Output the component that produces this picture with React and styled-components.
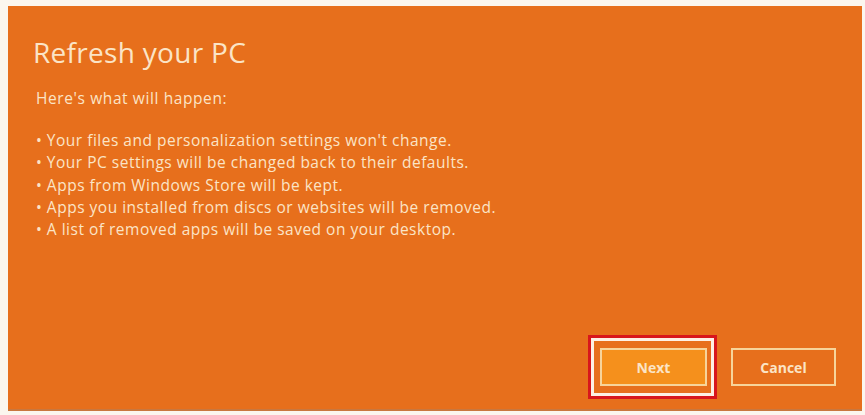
import React from "react";
import styled, { createGlobalStyle } from "styled-components";

const GlobalStyle = createGlobalStyle`
  html, body {
    margin: 0;
    padding: 0;
    background: #fbf6ee;
  }
`;

const Screen = styled.div`
  width: 865px;
  height: 415px;
  padding: 6px 3px 4px 8px;
  box-sizing: border-box;
  display: flex;
`;

const Panel = styled.div`
  flex: 1;
  background: #e76f1c;
  border-bottom: 2px solid #c9773e;
  display: flex;
  flex-direction: column;
  padding: 27px 26px 10px 25px;
  font-family: "Open Sans", "Noto Sans", sans-serif;
  color: #fbe4c6;
`;

const Title = styled.h1`
  margin: 0;
  font-size: 28px;
  font-weight: 400;
  letter-spacing: 0.3px;
  line-height: 38px;
`;

const Intro = styled.p`
  margin: 17px 0 21px 3px;
  font-size: 15.5px;
  letter-spacing: 0.6px;
  line-height: 20px;
`;

const List = styled.ul`
  list-style: none;
  margin: 0 0 0 3px;
  padding: 0;
`;

const Item = styled.li`
  font-size: 15.5px;
  letter-spacing: 0.5px;
  line-height: 22.3px;
  &::before {
    content: "• ";
  }
`;

const Actions = styled.div`
  margin-top: auto;
  display: flex;
  justify-content: flex-end;
  align-items: center;
  gap: 14px;
`;

// red focus frame drawn round the default action
const Highlight = styled.div`
  border: 3px solid #d8161c;
  box-shadow: inset 0 0 0 3px #fdf0e4;
  padding: 10px 7px 10px 9px;
`;

const Button = styled.button`
  width: ${(p) => (p.$wide ? "107px" : "105px")};
  height: 38px;
  box-sizing: border-box;
  border: 2px solid #f7d49a;
  background: ${(p) => (p.$primary ? "#f5901c" : "#e76f1c")};
  color: #fbe4c6;
  font-family: "Open Sans", "Noto Sans", sans-serif;
  font-size: 14px;
  font-weight: 700;
  cursor: pointer;
`;

const steps = [
  "Your files and personalization settings won't change.",
  "Your PC settings will be changed back to their defaults.",
  "Apps from Windows Store will be kept.",
  "Apps you installed from discs or websites will be removed.",
  "A list of removed apps will be saved on your desktop.",
];

const App = () => {
  return (
    <Screen>
      <GlobalStyle />
      <Panel>
        <Title>Refresh your PC</Title>
        <Intro>Here's what will happen:</Intro>
        <List>
          {steps.map((s) => (
            <Item key={s}>{s}</Item>
          ))}
        </List>
        <Actions>
          <Highlight>
            <Button $primary $wide>
              Next
            </Button>
          </Highlight>
          <Button>Cancel</Button>
        </Actions>
      </Panel>
    </Screen>
  );
};

export default App;
